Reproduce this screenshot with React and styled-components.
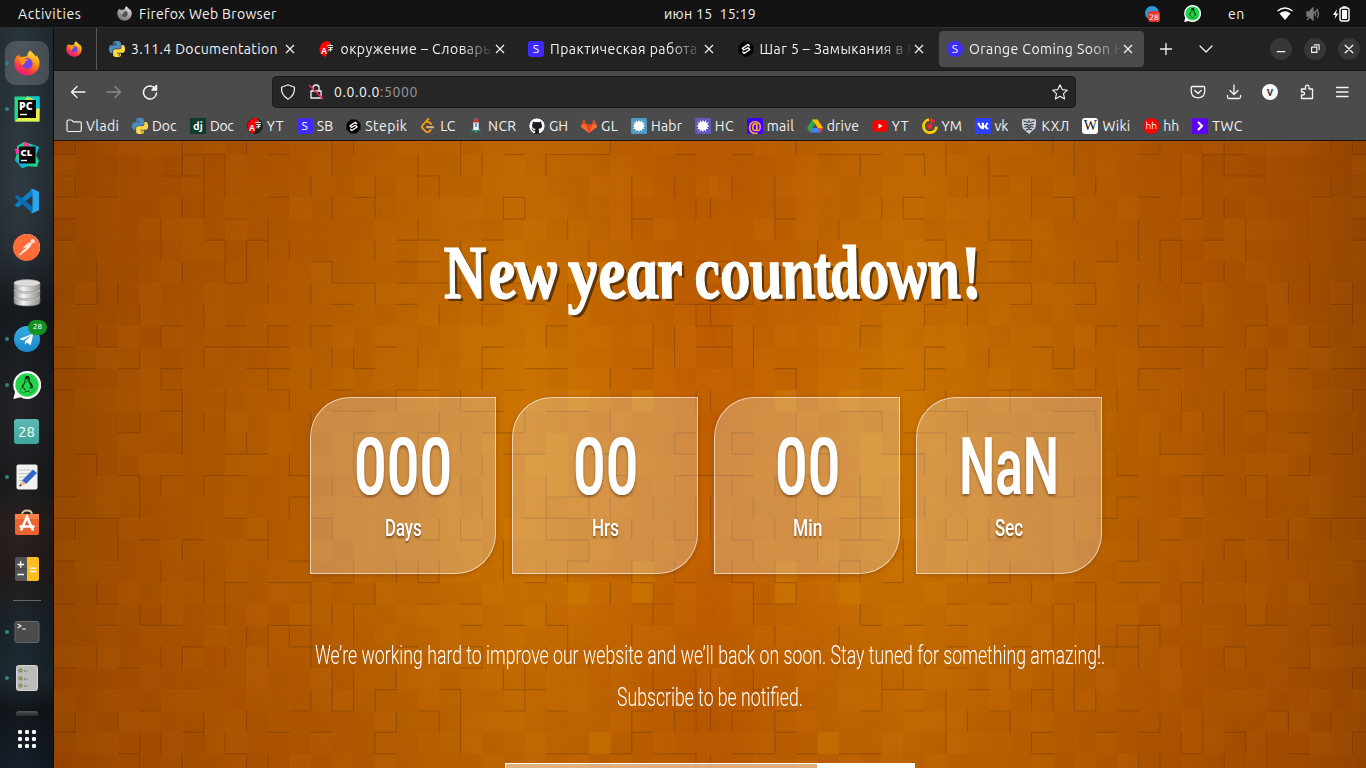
import React, { useLayoutEffect, useRef, useState } from "react";
import styled, { createGlobalStyle } from "styled-components";
import { FaGithub, FaTelegramPlane, FaVk, FaLinux } from "react-icons/fa";
import { SiPostman, SiLeetcode } from "react-icons/si";

const Global = createGlobalStyle`
  * { box-sizing: border-box; }
  body { margin: 0; overflow: hidden; background: #131313; }
  svg { display: block; flex: none; }
`;
const UI = `Ubuntu, "Noto Sans", "Open Sans", sans-serif`;

/* ---------- text fitted to a width ---------- */
const FitBox = styled.span`
  display: inline-block;
  flex: none;
  width: ${(p) => p.$w}px;
  white-space: nowrap;
`;
const FitInner = styled.span`
  display: inline-block;
  transform-origin: 0 50%;
`;
function Fit({ w, children, squeeze }) {
  const ref = useRef(null);
  const [style, setStyle] = useState({});
  useLayoutEffect(() => {
    const natural = ref.current.offsetWidth;
    const n = ref.current.textContent.length;
    setStyle(
      squeeze
        ? { transform: `scaleX(${w / natural})` }
        : { letterSpacing: `${(w - natural) / n}px` }
    );
  }, []);
  return (
    <FitBox $w={w}>
      <FitInner ref={ref} style={style}>{children}</FitInner>
    </FitBox>
  );
}

/* ---------- logos ---------- */
const SNAKE =
  "M14.25.18l.9.2.73.26.59.3.45.32.34.34.25.34.16.33.1.3.04.26.02.2-.01.13V8.5l-.05.63-.13.55-.21.46-.26.38-.3.31-.33.25-.35.19-.35.14-.33.1-.3.07-.26.04-.21.02H8.77l-.69.05-.59.14-.5.22-.41.27-.33.32-.27.35-.2.36-.15.37-.1.35-.07.32-.04.27-.02.21v3.06H3.17l-.21-.03-.28-.07-.32-.12-.35-.18-.36-.26-.36-.36-.35-.46-.32-.59-.28-.73-.21-.88-.14-1.05-.05-1.23.06-1.22.16-1.04.24-.87.32-.71.36-.57.4-.44.42-.33.42-.24.4-.16.36-.1.32-.05.24-.01h.16l.06.01h8.16v-.83H6.18l-.01-2.75-.02-.37.05-.34.11-.31.17-.28.25-.26.31-.23.38-.2.44-.18.51-.15.58-.12.64-.1.71-.06.77-.04.84-.02 1.27.05zm-6.3 1.98l-.23.33-.08.41.08.41.23.34.33.22.41.09.41-.09.33-.22.23-.34.08-.41-.08-.41-.23-.33-.33-.22-.41-.09-.41.09z";

const Python = () => (
  <svg width="16" height="16" viewBox="0 0 24 24">
    <path d={SNAKE} fill="#4b8bbe" />
    <path d={SNAKE} fill="#ffd845" transform="rotate(180 12 12)" />
  </svg>
);

const Firefox = ({ size = 16, gray }) => (
  <svg width={size} height={size} viewBox="0 0 26 26">
    <defs>
      <linearGradient id={gray ? "fg" : "ff"} x1="0.8" y1="0" x2="0.3" y2="1">
        <stop offset="0" stopColor={gray ? "#e8e8e8" : "#fff44f"} />
        <stop offset=".4" stopColor={gray ? "#b5b5b5" : "#ff980e"} />
        <stop offset=".75" stopColor={gray ? "#8a8a8a" : "#ff3647"} />
        <stop offset="1" stopColor={gray ? "#777" : "#e31587"} />
      </linearGradient>
    </defs>
    <path d="M16.500.5c1 2.200 4 3.300 5 6 .6-.4.6-1 .5-1.600C24.500 7.500 26 11 25.500 14.500 24.700 21 19.500 25.500 13 25.500 6 25.500.5 20 .5 13.200.5 10 1.700 7 3 5.200l.3 2C3.800 6.200 4.500 5 5.300 4.500L5.700 7c1-.4 2.500-.4 3.700 0 1.400-1 3.200-.8 3.900-.6C13 4 14.500 1.500 16.500.5z" fill={`url(#${gray ? "fg" : "ff"})`} />
    <circle cx="13.200" cy="13.500" r="5.400" fill={gray ? "#555" : "#7542e5"} />
    <path d="M5 8.500c2-1.800 5-1.200 6.500.7l3 .3c-.4 1.300-2.700 1.600-3.200 2.300-.2 2.300-2.600 2.200-2.600 4C7 14.500 7 11.500 5 8.500z" fill={gray ? "#aaa" : "#ff9a1c"} />
  </svg>
);

const Glyph = styled.span`
  display: flex;
  flex: none;
  align-items: center;
  justify-content: center;
  width: 16px;
  height: 16px;
  border-radius: ${(p) => p.$r || 0}px;
  background: ${(p) => p.$bg || "transparent"};
  color: ${(p) => p.$fg || "#fff"};
  font: ${(p) => p.$font || `12px/1 ${UI}`};
  overflow: hidden;
`;

const Translate = () => (
  <svg width="16" height="16" viewBox="0 0 16 16">
    <circle cx="8" cy="8" r="8" fill="#222" />
    <path d="M10.500.4A8 8 0 1 0 7 16z" fill="#f00" />
    <text x="2" y="13" fontSize="8.500" fontWeight="700" fontFamily="Liberation Sans" fill="#fff">A</text>
    <path d="M8 4.500h6M11 2.500v2M9 6.500h5M11.500 6.500v4M9.500 8.500h4M9 10.500l4-4" stroke="#eee" strokeWidth=".9" fill="none" />
  </svg>
);
const Stepik = ({ s = 16 }) => (
  <svg width={s} height={s} viewBox="0 0 16 16">
    <path d="M5 .5h6L15.500 5v6L11 15.500H5L.5 11V5z" fill="#000" />
    <path d="M11.800 5.300 10 3.500 4.300 7.300 5.800 9 10.200 6.700 11.800 8.500 6.200 12.300 4.300 10.700" stroke="#fff" strokeWidth="1.400" strokeLinejoin="round" fill="none" />
  </svg>
);
const Splat = ({ bg }) => (
  <svg width="16" height="16" viewBox="0 0 16 16">
    <rect width="16" height="16" rx="1.500" fill={bg} />
    <circle cx="8" cy="8" r="4.300" fill="#fff" />
    <path d="M8 1.800l1 2.500 2.300-2-.2 2.700 2.700-.7-1.600 2.300 2 1.400-2.200 1 1.500 2-2.600-.3.300 2.700-2.300-1.700L8 14.200l-1.200-2.500-2.200 2 .2-2.800-2.700.3 1.600-2.200-2-1 2.200-1.400-1.600-2 2.700.2-.2-2.500 2.200 2z" fill="#fff" />
  </svg>
);
const Folder = () => (
  <svg width="16" height="16" viewBox="0 0 16 16" fill="none" stroke="#f2f2f2" strokeWidth="1.200">
    <path d="M1 12V3.500Q1 2 2.500 2H5q.8 0 1.300.7l.5.600q.4.500 1 .5H14q1.300 0 1.300 1.400V12q0 1.500-1.500 1.500H2.500Q1 13.500 1 12z" />
  </svg>
);
const Rocket = () => (
  <svg width="16" height="16" viewBox="0 0 16 16">
    <path d="M5.500 9 3 13.500l3-.5zM10.500 9l2.500 4.500-3-.5z" fill="#3b88c3" />
    <path d="M5.300 12V5q0-3 2.700-5 2.700 2 2.700 5v7z" fill="#eee" />
    <path d="M5.500 4.500Q6 1.500 8 0q2 1.500 2.500 4.500z" fill="#d22" />
    <path d="M8 5v4" stroke="#3b88c3" strokeWidth="1.500" />
    <path d="M6 12h4L8 16z" fill="#19a84a" />
  </svg>
);
const Gitlab = () => (
  <svg width="16" height="16" viewBox="0 0 16 16">
    <path d="M8 15 .3 9.300q-.5-.5-.2-1.200L3 1l2 5.500h6L13 1l2.900 7.100q.3.700-.2 1.200z" fill="#fc6d26" />
    <path d="M8 15 5 6.500h6z" fill="#e24329" />
    <path d="M3 1 1.200 6.500H5zM13 1l1.800 5.500H11z" fill="#e24329" />
  </svg>
);
const Drive = () => (
  <svg width="16" height="16" viewBox="0 0 16 16">
    <path d="M5.300 1.500h5.400L5.500 10 2.800 14.500 0 10z" fill="#2da94f" />
    <path d="M5.300 1.500h5.400L16 10h-5.400z" fill="#ffba00" />
    <path d="M5.500 10H16l-2.700 4.500H2.800z" fill="#4285f4" />
    <path d="M10.700 10H16l-2.700 4.500z" fill="#ea4335" />
    <path d="M8 5.800 10.500 10h-5z" fill="#4b4b4b" />
  </svg>
);
const Youtube = () => (
  <svg width="16" height="16" viewBox="0 0 16 16">
    <rect x=".5" y="2.300" width="15" height="11.400" rx="3" fill="#f00" />
    <path d="M6.500 5.600 10.500 8l-4 2.400z" fill="#fff" />
  </svg>
);
const YMusic = () => (
  <svg width="16" height="16" viewBox="0 0 16 16">
    <path d="M7 1.700a6.500 6.500 0 1 0 7.500 7" fill="none" stroke="#fc0" strokeWidth="2.800" />
    <path d="M9.200 0v8" stroke="#f22" strokeWidth="1.600" />
    <circle cx="7.600" cy="8.600" r="2.500" fill="#f22" />
    <path d="M9 0l4 2.800v2L9 3z" fill="#f22" />
  </svg>
);
const Khl = () => (
  <svg width="16" height="16" viewBox="0 0 16 16">
    <path d="M1 1.500Q8-.5 15 1.500q.5 6-1 9L8 16l-6-5.500q-1.500-3-1-9z" fill="#c9ced3" />
    <path d="M2.500 3 7 4.500M13.500 3 9 4.500M3 6.500h3.500L8 8l1.500-1.500H13M3.500 9.500 6 8.500l2 2 2-2 2.500 1M5 12l3-1 3 1M8 2v3" stroke="#36404a" strokeWidth="1.200" fill="none" />
  </svg>
);
const Arrow = () => (
  <svg width="16" height="16" viewBox="0 0 16 16">
    <rect width="16" height="16" fill="#5f00ff" />
    <path d="M6 4l4 4-4 4" fill="none" stroke="#fff" strokeWidth="2.200" />
  </svg>
);
const Whats = ({ s }) => (
  <svg width={s} height={s} viewBox="0 0 28 28">
    <path d="M14 0a14 14 0 1 1-6.500 26.300L.3 28l1.800-7A14 14 0 0 1 14 0z" fill="#fff" />
    <circle cx="14" cy="14" r="11.700" fill="#25d34a" />
    <FaLinux x="5.500" y="5" size="17" color="#06200c" />
  </svg>
);

/* ---------- top bar ---------- */
const Screen = styled.div`
  width: 1366px;
  height: 768px;
  display: flex;
  flex-direction: column;
  overflow: hidden;
  color: #f2f2f2;
  font: 14px/18px ${UI};
`;
const TopBar = styled.header`
  height: 27px;
  flex: none;
  display: grid;
  grid-template-columns: 664px 92px 1fr;
  align-items: center;
  background: #131313;
`;
const TopLeft = styled.div`
  display: flex;
  align-items: center;
  padding-left: 18px;
  gap: 7px;
  svg { margin-left: 29px; }
`;
const TopRight = styled.div`
  display: flex;
  align-items: center;
  justify-content: flex-end;
  padding-right: 16px;
`;
const Space = styled.span`
  flex: none;
  width: ${(p) => p.$w}px;
`;
const Row = styled.div`
  display: flex;
  flex: 1;
  min-height: 0;
`;

/* ---------- dock ---------- */
const Dock = styled.nav`
  width: 54px;
  flex: none;
  display: flex;
  flex-direction: column;
  align-items: center;
  padding-top: 13px;
  border-right: 1px solid #0b0d10;
  background:
    linear-gradient(90deg, rgba(0,0,0,.12), transparent 40%, rgba(0,0,0,.25)),
    linear-gradient(180deg, #29343b 0, #303a41 22%, #2a3238 30%, #171b20 38%, #222428 52%, #1d1d20 62%, #2c2320 67%, #251d1c 74%, #1c262e 80%, #202b33 88%, #12171c 92%, #17202a 100%);
`;
const DockItem = styled.div`
  position: relative;
  width: 53px;
  height: 46px;
  flex: none;
  display: flex;
  align-items: center;
  justify-content: center;
  &::before {
    content: "";
    display: ${(p) => (p.$active ? "block" : "none")};
    position: absolute;
    inset: 1px 4px 1px 5px;
    border-radius: 11px;
    background: rgba(255,255,255,.17);
  }
  &::after {
    content: "";
    display: ${(p) => (p.$dot ? "block" : "none")};
    position: absolute;
    left: 5px;
    top: 21px;
    width: 4px;
    height: 4px;
    border-radius: 50%;
    background: #35847f;
  }
  svg { position: relative; }
`;
const Badge = styled.span`
  position: absolute;
  top: 4px;
  left: 28px;
  width: 19px;
  height: 15px;
  border-radius: 8px;
  background: #149121;
  color: #fff;
  font: 7px/15px "DejaVu Sans", sans-serif;
  text-align: center;
`;
const DockRule = styled.div`
  width: 28px;
  height: 17px;
  flex: none;
  border-top: 1px solid #66676a;
  margin-top: 8px;
  margin-bottom: -8px;
`;
const DockCut = styled.div`
  width: 22px;
  height: 5px;
  margin: 10px 0 0;
  flex: none;
  border-radius: 3px 3px 0 0;
  background: linear-gradient(#54585b, #23282c);
`;

const Pycharm = () => (
  <svg width="26" height="26" viewBox="0 0 26 26">
    <rect x=".5" y=".5" width="25" height="25" fill="#21d789" />
    <path d="M13 .5h12.500v16L18 20z" fill="#14c4d8" />
    <path d="M13 .5 20 3 6 12z" fill="#b8e94a" />
    <path d="M25.500 12v13.500H1L8 18z" fill="#ecf04c" />
    <rect x="4" y="4" width="18" height="18" fill="#050505" />
    <text x="5" y="13.500" fontFamily="Open Sans" fontSize="10.500" fontWeight="800" fill="#fff">PC</text>
    <path d="M6 18.500h7" stroke="#fff" strokeWidth="1.400" />
  </svg>
);
const Clion = () => (
  <svg width="26" height="28" viewBox="0 0 26 28">
    <path d="M3 5 10 1l7 2 8 3-3 8 3 6-2 6-9-1-6 2-7-8 2-7z" fill="#1fd08b" />
    <path d="M10 1l5 1.500V8H9zM1 8l5-1v6H2z" fill="#ef3c9c" />
    <path d="M16 3l9 3-3 8zM8 27l-7-8 6-1 8 7z" fill="#13b5cf" />
    <rect x="5" y="5.500" width="16.500" height="17" fill="#080808" />
    <text x="6.500" y="14.500" fontFamily="Open Sans" fontSize="9.500" fontWeight="800" fill="#fff">CL</text>
    <path d="M7 19.500h6" stroke="#fff" strokeWidth="1.300" />
  </svg>
);
const Vscode = () => (
  <svg width="26" height="26" viewBox="0 0 26 26">
    <path d="M19 1v6L4 19.500 1 17.500v-1L17 2z" fill="#0a7fc9" />
    <path d="M1 8.500 3.500 7 19 19v6.200L17 24 1 9.500z" fill="#0b6bb3" />
    <path d="M18.500.8 25 3.700v18.600l-6.500 2.900q-1.500.2-2-.8 2 .2 2-1.500V3q0-1.500-2-1.400.5-1 2-.8z" fill="#2ba4ee" />
  </svg>
);
const Database = () => (
  <svg width="28" height="28" viewBox="0 0 28 28">
    <defs>
      <linearGradient id="cyl">
        <stop offset="0" stopColor="#8d8d8d" /><stop offset=".35" stopColor="#f4f4f4" /><stop offset="1" stopColor="#8a8a8a" />
      </linearGradient>
    </defs>
    {[18, 11, 4].map((y) => (
      <g key={y}>
        <path d={`M1 ${y}v5q0 4 13 4t13-4v-5z`} fill="url(#cyl)" stroke="#777" strokeWidth=".6" />
        <ellipse cx="14" cy={y} rx="13" ry="3.400" fill="#dcdcdc" stroke="#999" strokeWidth=".5" />
      </g>
    ))}
  </svg>
);
const Disc = styled.div`
  width: ${(p) => p.$s}px;
  height: ${(p) => p.$s}px;
  display: flex;
  align-items: center;
  justify-content: center;
  border-radius: ${(p) => p.$r || "50%"};
  background: ${(p) => p.$bg};
  color: #fff;
  font: ${(p) => p.$font || "inherit"};
`;
const Editor = () => (
  <svg width="24" height="26" viewBox="0 0 24 26">
    <rect x="1.500" y=".5" width="21" height="25" rx="2" fill="#f1f1ef" />
    <path d="M3.500 6H17M3.500 9.500H15M3.500 13h10M3.500 16.500H9" stroke="#c7c7c3" />
    <path d="M18 5.500 22 9 11 20l-4-3.500z" fill="#3465c9" />
    <path d="M7 16.500 11 20l-6.500 2z" fill="#e9bd85" />
    <path d="M5.200 20 4 22.500l2.700-.8z" fill="#222" />
  </svg>
);
const Store = () => (
  <svg width="26" height="29" viewBox="0 0 26 29">
    <path d="M8 6q0-4.500 5-4.500T18 6" fill="none" stroke="#d8c6a4" strokeWidth="1.800" />
    <path d="M1 5h24v19q0 2-2 2H3q-2 0-2-2z" fill="#ee6430" />
    <path d="M1 5h24v5H1z" fill="#f98049" />
    <path d="M7 21.500 13 8l6 13.500M5.500 17.500h15" fill="none" stroke="#fff" strokeWidth="2.600" />
  </svg>
);
const Calc = () => (
  <svg width="26" height="26" viewBox="0 0 26 26">
    <rect x="1" y="1" width="24" height="24" rx="2.500" fill="#555" />
    <path d="M13 1h9.500Q25 1 25 3.500v19q0 2.500-2.500 2.500H13z" fill="#fbbd22" />
    <path d="M1 13h12" stroke="#404040" />
    <path d="M3.500 8.500h6.500M6.700 5.300v6.400M3.500 18.500h6.500M16 12.200h6.500M16 15.500h6.500" stroke="#fff" strokeWidth="1.300" />
  </svg>
);
const Terminal = () => (
  <svg width="26" height="22" viewBox="0 0 26 22">
    <rect x="1" y=".5" width="24" height="21" rx="2" fill="#4b4b4b" stroke="#666" />
    <path d="M3.500 3 7 5 3.500 7M8 8h4" fill="none" stroke="#eee" strokeWidth="1.200" />
  </svg>
);
const Todo = () => (
  <svg width="24" height="26" viewBox="0 0 24 26">
    <rect x="1.500" y=".5" width="21" height="25" rx="2" fill="#bcbcbb" stroke="#d5d5d5" />
    {[5.5, 13.5, 20.5].map((y) => (
      <g key={y}>
        <circle cx="5.500" cy={y} r="1.700" fill="#8ab33f" stroke="#6b6b6b" strokeWidth=".7" />
        <path d={`M9 ${y + 0.5}h2M12 ${y + 0.5}h1`} stroke="#666" />
      </g>
    ))}
  </svg>
);
const Apps = () => (
  <svg width="20" height="20" viewBox="0 0 20 20" fill="#f4f4f4">
    {[1, 8, 15].map((y) => [1, 8, 15].map((x) => <rect key={x + "-" + y} x={x} y={y} width="4" height="4" rx="1.200" />))}
  </svg>
);

/* ---------- browser ---------- */
const Browser = styled.main`
  flex: 1;
  min-width: 0;
  display: flex;
  flex-direction: column;
`;
const TabBar = styled.div`
  height: 44px;
  flex: none;
  display: flex;
  align-items: center;
  background: #222;
  border-top: 1px solid #303030;
  border-bottom: 1px solid #171717;
`;
const Pinned = styled.div`
  display: flex;
  flex: none;
  align-items: center;
  width: 43px;
  height: 100%;
  padding-left: 12px;
  margin-right: 4px;
  border-right: 1px solid #5a5a5a;
`;
const Tab = styled.div`
  display: flex;
  align-items: center;
  flex: none;
  width: 205px;
  height: 36px;
  margin-right: 4.5px;
  padding-left: 8px;
  border-radius: 4px;
  background: ${(p) => (p.$active ? "#4b4b4b" : "transparent")};
`;
const TabTitle = styled.span`
  width: 151px;
  margin-left: 6px;
  overflow: hidden;
  white-space: nowrap;
  mask-image: ${(p) => (p.$fade ? "linear-gradient(90deg, #000 120px, transparent 153px)" : "none")};
`;
const Close = () => (
  <svg width="16" height="16" viewBox="0 0 16 16" stroke="#f2f2f2" strokeWidth="1.200">
    <path d="M4 4l8 8M12 4l-8 8" />
  </svg>
);
const WinButton = styled.span`
  display: flex;
  flex: none;
  align-items: center;
  justify-content: center;
  width: 22px;
  height: 22px;
  margin-right: 12px;
  border-radius: 50%;
  background: #373737;
`;
const NavBar = styled.div`
  height: 41px;
  flex: none;
  display: flex;
  align-items: center;
  background: #4b4b4b;
`;
const Url = styled.div`
  display: flex;
  align-items: center;
  width: 804px;
  height: 32px;
  padding: 0 7px;
  border: 1px solid #1b1b1b;
  border-radius: 4px;
  background: #262626;
  em { color: #999; font-style: normal; }
`;
const UrlText = styled.span`
  flex: 1;
  margin-left: 9px;
`;
const Bookmarks = styled.div`
  height: 29px;
  flex: none;
  display: flex;
  align-items: center;
  gap: 12.95px;
  padding-left: 12px;
  background: #4b4b4b;
  border-bottom: 1px solid #171310;
`;
const Bookmark = styled.div`
  display: flex;
  align-items: center;
  gap: 4px;
  flex: none;
`;
const Line = ({ d, s = 16, c = "#f5f5f5", w = 1.3, fill = "none" }) => (
  <svg width={s} height={s} viewBox="0 0 16 16" fill={fill} stroke={c} strokeWidth={w} strokeLinecap="round" strokeLinejoin="round">
    <path d={d} />
  </svg>
);

const S = ({ r }) => <Glyph $bg="#3f2bff" $r={r}>S</Glyph>;
const TABS = [
  [<Python />, "3.11.4 Documentation", 147],
  [<Translate />, "окружение – Словарь", 150],
  [<S r={3} />, "Практическая работа –", 159],
  [<Stepik />, "Шаг 5 – Замыкания в Pyt", 170],
  [<S r={8} />, "Orange Coming Soon HTML", 184],
];
const MARKS = [
  [<Folder />, "Vladi", 33],
  [<Python />, "Doc", 25],
  [<Glyph $bg="#0c3c2c" $font={`700 11px/1 ${UI}`}>dj</Glyph>, "Doc", 24],
  [<Translate />, "YT", 17],
  [<S r={3} />, "SB", 16.5],
  [<Stepik s={15} />, "Stepik", 42],
  [<Glyph><svg width="16" height="16"><SiLeetcode size="15" color="#ffa116" /><path d="M7 9.500h7" stroke="#b3b3b3" strokeWidth="1.500" /></svg></Glyph>, "LC", 15],
  [<Rocket />, "NCR", 28],
  [<Glyph $bg="#1c1c22" $r={8}><FaGithub size="16" /></Glyph>, "GH", 19],
  [<Gitlab />, "GL", 17],
  [<Splat bg="#4f9bc4" />, "Habr", 31],
  [<Splat bg="#6458be" />, "HC", 19],
  [<Glyph $bg="#3a00ff" $fg="#ffa930" $r={2} $font={`700 14px/14px ${UI}`}>@</Glyph>, "mail", 27],
  [<Drive />, "drive", 32],
  [<Youtube />, "YT", 17],
  [<YMusic />, "YM", 20],
  [<Glyph $bg="#2d40ff"><FaVk size="12" /></Glyph>, "vk", 14],
  [<Khl />, "КХЛ", 28],
  [<Glyph $bg="#fff" $fg="#111" $r={3} $font={`14px/1 "Liberation Serif", serif`}>W</Glyph>, "Wiki", 28],
  [<Glyph $bg="#f00" $r={8} $font={`10px/1 ${UI}`}>hh</Glyph>, "hh", 16],
  [<Arrow />, "TWC", 31],
];

/* ---------- page ---------- */
const Page = styled.section`
  position: relative;
  flex: 1;
  display: flex;
  flex-direction: column;
  align-items: center;
  overflow: hidden;
  color: #fff;
`;
const Backdrop = styled.svg`
  position: absolute;
  inset: 0;
`;
const Title = styled.h1`
  position: relative;
  display: flex;
  gap: 12px;
  height: 100px;
  margin: 81px 0 0 3px;
  font: italic 700 76px/100px "Liberation Serif", serif;
  -webkit-text-stroke: 1.5px #fff;
  text-shadow: 3px 3px 0 #5c3408;
  transform: skewX(9deg);
`;
const Counters = styled.div`
  position: relative;
  display: flex;
  gap: 16px;
  margin: 75px 8px 0 0;
`;
const Card = styled.div`
  display: flex;
  flex-direction: column;
  align-items: center;
  width: 186px;
  height: 177px;
  padding-top: 28px;
  border: 1px solid rgba(255,255,255,.6);
  border-radius: 40px 0;
  background: rgba(255,255,255,.27);
  box-shadow: 0 1px 4px rgba(60,25,0,.25);
`;
const Number = styled.div`
  height: 82px;
  font: 600 80px/82px Roboto, sans-serif;
  text-shadow: 0 2px 3px rgba(50,25,0,.45);
`;
const Unit = styled.div`
  margin-top: 6px;
  font: 500 24px/28px Roboto, sans-serif;
  text-shadow: 0 2px 2px rgba(50,25,0,.5);
`;
const Blurb = styled.p`
  position: relative;
  display: flex;
  flex-direction: column;
  align-items: center;
  margin: 60px 0 0;
  font: 300 26px/42px Roboto, sans-serif;
`;
const Subscribe = styled.div`
  position: relative;
  display: flex;
  margin-top: 45px;
`;
const Email = styled.div`
  width: 313px;
  height: 40px;
  border: 1px solid #fff;
  background: rgba(255,255,255,.5);
`;
const Send = styled.div`
  width: 97px;
  height: 40px;
  background: #fff;
`;

const T = 21.4;
function buildMosaic() {
  let seed = 77;
  const rnd = () => (seed = (seed * 16807) % 2147483647) / 2147483647;
  const tiles = [];
  const hard = [];
  const soft = [];
  const cols = 31;
  for (let r = -1; r < 30; r++) {
    for (let c = 0; c < cols; c++) {
      const y = +(13.6 + r * T).toFixed(1);
      const v = rnd();
      const right = rnd() < 0.24;
      const bottom = rnd() < 0.24;
      const glow = c > 21 && c < 28 && rnd() < 0.08;
      [false, true].forEach((flip) => {
        const x = +(flip ? 1312 - (c + 1) * T + 8 : c * T).toFixed(1);
        if (flip ? x < 656 : x > 656) return;
        tiles.push(
          <rect key={`${r}.${c}.${flip}`} x={x} y={y} width={T} height={T}
            fill={glow ? "#e09a00" : v > 0.5 ? "#ffa020" : "#9a3800"}
            opacity={glow ? 0.2 : Math.abs(v - 0.5) * 0.11} />
        );
        soft.push(`M${x + 1} ${y + T}V${y + 1}H${x + T}`);
        if (right) hard.push(`M${x} ${y}v${T}`);
        if (bottom) hard.push(`M${x} ${y}h${T}`);
      });
    }
  }
  return { tiles, hard: hard.join(""), soft: soft.join("") };
}
const MOSAIC = buildMosaic();

const Mosaic = () => (
  <Backdrop width="1312" height="628" viewBox="0 0 1312 628">
    <defs>
      <linearGradient id="base">
        <stop offset="0" stopColor="#954800" />
        <stop offset=".05" stopColor="#a24f00" />
        <stop offset=".13" stopColor="#ad5700" />
        <stop offset=".23" stopColor="#b96200" />
        <stop offset=".36" stopColor="#ca7300" />
        <stop offset=".5" stopColor="#c16000" />
        <stop offset=".65" stopColor="#c97200" />
        <stop offset=".78" stopColor="#bb6300" />
        <stop offset=".87" stopColor="#ae5700" />
        <stop offset=".95" stopColor="#a35000" />
        <stop offset="1" stopColor="#944700" />
      </linearGradient>
      <linearGradient id="shade" x2="0" y2="1">
        <stop offset="0" stopColor="#963c00" stopOpacity=".25" />
        <stop offset=".4" stopColor="#963c00" stopOpacity="0" />
        <stop offset=".65" stopColor="#963c00" stopOpacity="0" />
        <stop offset="1" stopColor="#963c00" stopOpacity=".28" />
      </linearGradient>
    </defs>
    <rect width="1312" height="628" fill="url(#base)" />
    <rect width="1312" height="628" fill="url(#shade)" />
    {MOSAIC.tiles}
    <path d={MOSAIC.soft} fill="none" stroke="#e58a10" strokeOpacity=".08" />
    <path d={MOSAIC.hard} fill="none" stroke="#4a2300" strokeOpacity=".26" strokeWidth="1.200" />
  </Backdrop>
);

const CARDS = [["000", 98, "Days", 37], ["00", 65, "Hrs", 27], ["00", 65, "Min", 29], ["NaN", 100, "Sec", 28]];

export default function App() {
  return (
    <Screen>
      <Global />
      <TopBar>
        <TopLeft>
          <Fit w={63}>Activities</Fit>
          <Firefox size={15} gray />
          <Fit w={138}>Firefox Web Browser</Fit>
        </TopLeft>
        <Fit w={92}>июн 15&nbsp; 15:19</Fit>
        <TopRight>
          <svg width="16" height="16" viewBox="0 0 16 16">
            <circle cx="7" cy="7" r="7" fill="#2b9bd8" />
            <rect x="3" y="5" width="12" height="11" rx="3" fill="#e8352e" />
            <text x="4.200" y="13.500" fontSize="7.500" fill="#fff" fontFamily="DejaVu Sans">28</text>
          </svg>
          <Space $w={23} />
          <Whats s={17} />
          <Space $w={27} />
          <Fit w={17}>en</Fit>
          <Space $w={31} />
          <svg width="18" height="16" viewBox="0 0 18 16">
            <path d="M1.500 5Q9-1 16.500 5" fill="none" stroke="#fff" strokeWidth="1.300" />
            <path d="M3.500 7.500Q9 3 14.500 7.500L9 14z" fill="#fff" />
          </svg>
          <Space $w={11} />
          <svg width="16" height="16" viewBox="0 0 16 16" fill="none" stroke="#777" strokeWidth="1.300">
            <path d="M2 6h2l4-4v12L4 10H2zM2 14 13 3" fill="#777" />
            <path d="M10 6q1.500 2 0 4M12 4q3 4 0 8" />
          </svg>
          <Space $w={11} />
          <svg width="18" height="16" viewBox="0 0 18 16">
            <path d="M5 3 1 9h2.500L2.500 13l4-5.500H4z" fill="#fff" />
            <rect x="8" y="2" width="9" height="13" rx="2" fill="none" stroke="#fff" strokeWidth="1.400" />
            <rect x="10" y="4" width="5" height="9" fill="#fff" />
            <path d="M10.500 1h4" stroke="#fff" strokeWidth="1.500" />
          </svg>
        </TopRight>
      </TopBar>
      <Row>
        <Dock>
          <DockItem $active $dot><Firefox size={26} /></DockItem>
          <DockItem $dot><Pycharm /></DockItem>
          <DockItem><Clion /></DockItem>
          <DockItem><Vscode /></DockItem>
          <DockItem><Disc $s={26} $bg="#fff"><SiPostman size="27" color="#ff6c37" /></Disc></DockItem>
          <DockItem><Database /></DockItem>
          <DockItem $dot>
            <Disc $s={26} $bg="linear-gradient(#36aee2,#1c86c9)"><FaTelegramPlane size="15" /></Disc>
            <Badge>28</Badge>
          </DockItem>
          <DockItem $dot><Whats s={28} /></DockItem>
          <DockItem><Disc $s={25} $r="3px" $bg="linear-gradient(#5cb8b2,#3fa69d)" $font={`15px/1 ${UI}`}>28</Disc></DockItem>
          <DockItem $dot><Editor /></DockItem>
          <DockItem><Store /></DockItem>
          <DockItem><Calc /></DockItem>
          <DockRule />
          <DockItem $dot><Terminal /></DockItem>
          <DockItem $dot><Todo /></DockItem>
          <DockCut />
          <DockItem><Apps /></DockItem>
        </Dock>
        <Browser>
          <TabBar>
            <Pinned><Firefox /></Pinned>
            {TABS.map(([icon, title, w], i) => (
              <Tab key={title} $active={i === 4}>
                {icon}
                <TabTitle $fade={i > 0}><Fit w={w}>{title}</Fit></TabTitle>
                <Close />
              </Tab>
            ))}
            <Space $w={9} />
            <Line d="M8 2.500v11M2.500 8h11" />
            <Space $w={24} />
            <Line d="M2 5l6 6 6-6" />
            <Space $w={56} />
            <WinButton><Line s={12} w={1.6} d="M3 11.500h10" /></WinButton>
            <WinButton><Line s={12} w={1.5} d="M3.500 5.500h7v7h-7zM7 2.500h6.500V9" /></WinButton>
            <WinButton><Line s={12} w={1.8} d="M3 3l10 10M13 3L3 13" /></WinButton>
          </TabBar>
          <NavBar>
            <Space $w={16} />
            <Line d="M15 8H1.500M7 2.500 1.500 8 7 13.500" />
            <Space $w={20} />
            <Line c="#8a8a8a" d="M1 8h13.500M9 2.500 14.500 8 9 13.500" />
            <Space $w={20} />
            <Line w={1.5} d="M13.500 5A6.500 6.500 0 1 0 14.500 9M14.500 1.500V6H10z" />
            <Space $w={114} />
            <Url>
              <Line w={1.2} d="M8 .8 14.500 3.200q.5 8-6.500 12Q1 11 1.500 3.200z" />
              <Space $w={11} />
              <svg width="18" height="18" viewBox="0 0 18 18" fill="none" stroke="#f2f2f2" strokeWidth="1.300">
                <path d="M4 8h10v7H4zM6 8V4.500Q6 2 9 2t3 2.500V8" />
                <path d="M2 2l14 14" stroke="#e8254f" strokeWidth="1.600" />
              </svg>
              <UrlText><Fit w={84}>0.0.0.0<em>:5000</em></Fit></UrlText>
              <Line w={1.1} d="M8 .8l2.200 4.800 5.200.6-3.900 3.500 1.100 5.200L8 12.300l-4.600 2.600 1.100-5.200L.6 6.200l5.200-.6z" />
            </Url>
            <Space $w={114} />
            <Line d="M2.500 2.500h11q1.200 0 1.200 1.200V7.500Q14.500 13.500 8 13.800 1.500 13.500 1.300 7.500V3.700q0-1.200 1.200-1.200zM4.800 6.500 8 9.500l3.200-3" />
            <Space $w={20} />
            <Line d="M8 1v9M4 6.500 8 10.500l4-4M1.500 11.500V13q0 1.500 1.500 1.500h10q1.500 0 1.500-1.500v-1.500" />
            <Space $w={20} />
            <Glyph $bg="#fafafa" $r={8} $fg="#444" $font={`700 12px/1 ${UI}`}>v</Glyph>
            <Space $w={21} />
            <Line d="M2.500 5h4V3q0-1.800 1.700-1.800T10 3v2h3.500v9.500h-11V11H4q1.500 0 1.500-1.500T4 8H2.500z" />
            <Space $w={19} />
            <Line d="M2.500 3.500h11.500M2.500 8h11.500M2.500 12.500h11.500" />
          </NavBar>
          <Bookmarks>
            {MARKS.map(([icon, label, w], i) => (
              <Bookmark key={i}>{icon}<Fit w={w}>{label}</Fit></Bookmark>
            ))}
          </Bookmarks>
          <Page>
            <Mosaic />
            <Title>
              <Fit squeeze w={115}>New</Fit>
              <Fit squeeze w={113}>year</Fit>
              <Fit squeeze w={288}>countdown!</Fit>
            </Title>
            <Counters>
              {CARDS.map(([n, w, unit, uw]) => (
                <Card key={unit}>
                  <Number><Fit squeeze w={w}>{n}</Fit></Number>
                  <Unit><Fit squeeze w={uw}>{unit}</Fit></Unit>
                </Card>
              ))}
            </Counters>
            <Blurb>
              <Fit squeeze w={790}>We’re working hard to improve our website and we’ll back on soon. Stay tuned for something amazing!.</Fit>
              <Fit squeeze w={186}>Subscribe to be notified.</Fit>
            </Blurb>
            <Subscribe><Email /><Send /></Subscribe>
          </Page>
        </Browser>
      </Row>
    </Screen>
  );
}
